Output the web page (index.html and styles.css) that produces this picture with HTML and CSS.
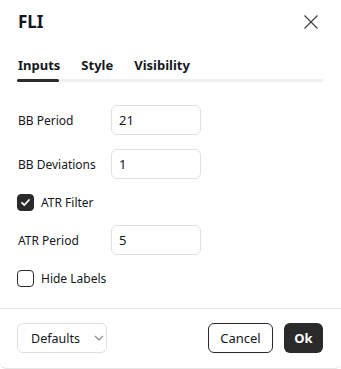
FILE: index.html
```html
<!DOCTYPE html>
<html>
<head>
<meta charset="utf-8">
<link rel="stylesheet" href="styles.css">
</head>
<body>
<div class="dialog">
  <div class="header">
    <div class="title">FLI</div>
    <button class="close" aria-label="Close">
      <svg width="14" height="14" viewBox="0 0 14 14"><path d="M0.5 0.5L13.5 13.5M13.5 0.5L0.5 13.5" stroke="#3a3a3a" stroke-width="1.1" fill="none"/></svg>
    </button>
  </div>
  <div class="tabs">
    <div class="tab-list">
      <span class="tab active">Inputs</span>
      <span class="tab">Style</span>
      <span class="tab">Visibility</span>
    </div>
    <div class="track"><div class="track-active"></div></div>
  </div>
  <div class="body">
    <div class="row">
      <span class="label">BB Period</span>
      <div class="input">21</div>
    </div>
    <div class="row">
      <span class="label">BB Deviations</span>
      <div class="input">1</div>
    </div>
    <div class="check-row">
      <span class="checkbox checked">
        <svg width="11" height="11" viewBox="0 0 11 11"><path d="M2 5.8L4.4 8L9 3" stroke="#fff" stroke-width="1.8" fill="none" stroke-linecap="round" stroke-linejoin="round"/></svg>
      </span>
      <span class="check-label">ATR Filter</span>
    </div>
    <div class="row">
      <span class="label">ATR Period</span>
      <div class="input">5</div>
    </div>
    <div class="check-row">
      <span class="checkbox"></span>
      <span class="check-label">Hide Labels</span>
    </div>
  </div>
  <div class="footer">
    <button class="btn defaults">Defaults
      <svg width="10" height="6" viewBox="0 0 10 6"><path d="M1 1L5 5L9 1" stroke="#8a8a8a" stroke-width="1.1" fill="none"/></svg>
    </button>
    <div class="actions">
      <button class="btn cancel">Cancel</button>
      <button class="btn ok">Ok</button>
    </div>
  </div>
</div>
</body>
</html>
```

FILE: styles.css
```css
* { box-sizing: border-box; }
html, body { margin: 0; padding: 0; background: #fff; }
body {
  font-family: "Noto Sans", "Open Sans", sans-serif;
  color: #131722;
  width: 341px;
  height: 369px;
  overflow: hidden;
}
.dialog {
  width: 341px;
  height: 369px;
  border-bottom: 1px solid #e6e6e6;
  border-radius: 0 0 6px 6px;
  display: flex;
  flex-direction: column;
}
.header {
  display: flex;
  justify-content: space-between;
  align-items: center;
  padding: 10px 23px 0 18px;
  height: 34px;
}
.title {
  font-size: 17px;
  font-weight: 700;
  line-height: 24px;
}
.close {
  border: 0;
  background: none;
  padding: 0;
  width: 14px;
  height: 14px;
  display: flex;
}
.tabs {
  padding: 21px 18px 0 17px;
}
.tab-list {
  display: flex;
  gap: 21px;
  padding-left: 1px;
}
.tab {
  font-size: 13px;
  font-weight: 700;
  line-height: 20px;
}
.track {
  margin-top: 4px;
  height: 3px;
  border-radius: 2px;
  background: #f0f0f0;
}
.track-active {
  width: 42px;
  height: 3px;
  border-radius: 2px;
  background: #2a2a2a;
}
.body {
  padding: 23px 18px 21px 18px;
  display: flex;
  flex-direction: column;
  gap: 14px;
}
.row {
  display: flex;
  align-items: center;
  height: 30px;
}
.label {
  width: 93px;
  font-size: 12px;
}
.input {
  width: 90px;
  height: 30px;
  border: 1px solid #e0e0e0;
  border-radius: 6px;
  padding-left: 7px;
  font-size: 13px;
  line-height: 28px;
}
.check-row {
  display: flex;
  align-items: center;
  height: 18px;
}
.checkbox {
  width: 17px;
  height: 17px;
  margin-left: -1px;
  border: 1.5px solid #2a2a2a;
  border-radius: 4px;
  display: flex;
  align-items: center;
  justify-content: center;
}
.checkbox.checked {
  background: #2a2a2a;
}
.check-label {
  margin-left: 7px;
  font-size: 12px;
}
.footer {
  border-top: 1px solid #e8e8e8;
  padding: 14px 18px 0 17px;
  display: flex;
  justify-content: space-between;
}
.btn {
  font-family: "Noto Sans", "Open Sans", sans-serif;
  height: 30px;
  border-radius: 6px;
  font-size: 13px;
  color: #131722;
  background: #fff;
  padding: 0;
}
.defaults {
  width: 90px;
  border: 1px solid #e0e0e0;
  display: flex;
  align-items: center;
  padding-left: 13px;
  gap: 14px;
  font-size: 12.5px;
}
.actions {
  display: flex;
  gap: 11px;
}
.cancel {
  width: 65px;
  border: 1px solid #2a2a2a;
}
.ok {
  width: 39px;
  border: 0;
  background: #2a2a2a;
  color: #fff;
  font-weight: 700;
}
```
